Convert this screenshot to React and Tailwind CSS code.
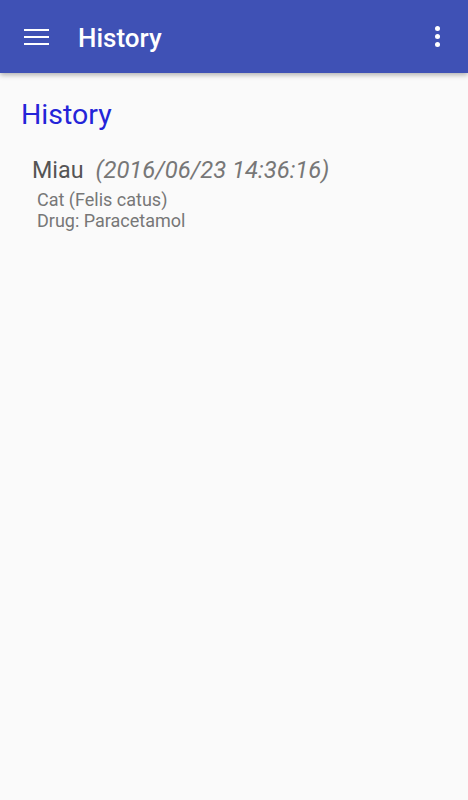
import React from 'react';

const history = [
    {
        id: 1,
        name: 'Miau',
        date: '(2016/06/23 14:36:16)',
        species: 'Cat (Felis catus)',
        drug: 'Paracetamol',
    },
];

export default function App() {
    return (
        <div className="w-[468px] h-[800px] bg-[#fafafa] font-['Roboto',sans-serif] overflow-hidden">
            {/* Toolbar */}
            <div className="relative z-10 h-[73px] bg-[#3f51b5] flex items-center shadow-[0_2px_5px_rgba(0,0,0,0.3)]">
                <button className="ml-6 w-6 h-6 flex flex-col justify-center gap-[5px]">
                    <span className="block h-[2px] w-[25px] bg-white" />
                    <span className="block h-[2px] w-[25px] bg-white" />
                    <span className="block h-[2px] w-[25px] bg-white" />
                </button>
                <h1 className="ml-[30px] text-white text-[26px] font-medium leading-none pt-[2px]">History</h1>
                <button className="ml-auto mr-[28px] flex flex-col items-center gap-[3px]">
                    <span className="block w-[5px] h-[5px] rounded-full bg-white" />
                    <span className="block w-[5px] h-[5px] rounded-full bg-white" />
                    <span className="block w-[5px] h-[5px] rounded-full bg-white" />
                </button>
            </div>

            {/* Content */}
            <div className="px-[21px] pt-[25px]">
                <h2 className="text-[28.5px] leading-[34px] text-[#2424d8]">History</h2>
                <div className="mt-[23px] pl-[11px]">
                    {history.map((item) => (
                        <div key={item.id}>
                            <div className="text-[23.3px] leading-[30px] text-[#555555]">
                                {item.name}
                                <span className="ml-[12px] italic text-[23.8px] text-[#777777]">{item.date}</span>
                            </div>
                            <div className="pl-[5px] mt-[4px] text-[18px] leading-[21px] text-[#777777]">
                                <p>{item.species}</p>
                                <p>Drug: {item.drug}</p>
                            </div>
                        </div>
                    ))}
                </div>
            </div>
        </div>
    );
}
